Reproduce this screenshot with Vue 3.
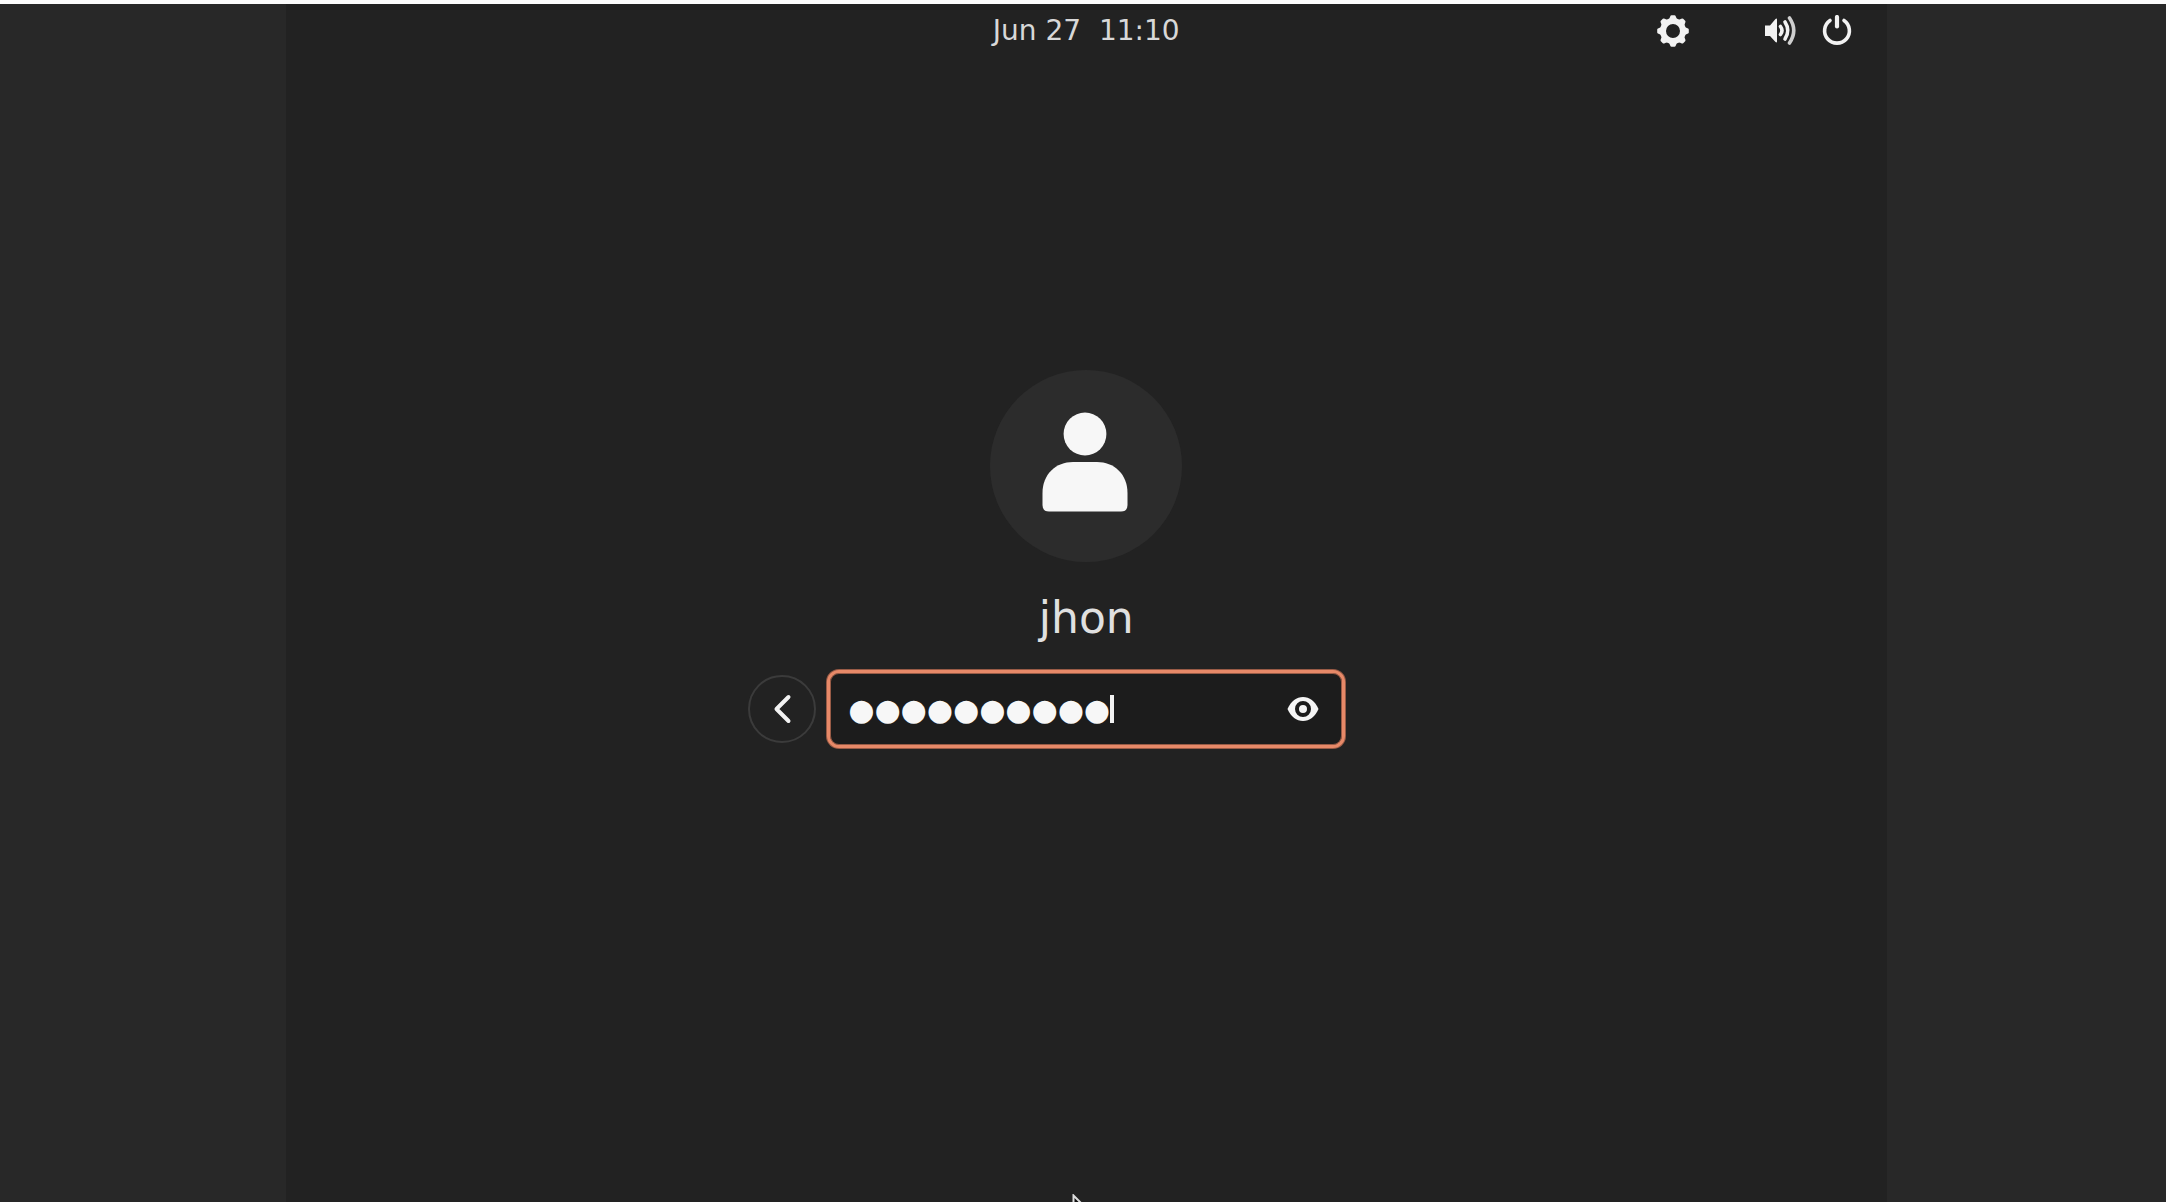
<script setup>
import { ref } from 'vue'

const mask = ref('●'.repeat(10))
const teeth = [0, 45, 90, 135, 180, 225, 270, 315]
</script>

<template>
  <div class="screen">
    <div class="panel">
      <header class="topbar">
        <time class="clock">Jun 27&nbsp; 11:10</time>
        <div class="tray">
          <button class="icon session" type="button" aria-label="Session settings">
            <svg viewBox="0 0 32 32" width="32" height="32">
              <circle cx="16" cy="16" r="10" fill="none" stroke="#f2f2f2" stroke-width="6" />
              <path
                v-for="a in teeth"
                :key="a"
                :transform="`rotate(${a} 16 16)`"
                d="M11.5 5.5 L13.2 1.5 Q13.6 0.2 14.6 0.2 H17.4 Q18.4 0.2 18.8 1.5 L20.5 5.5 Z"
                fill="#f2f2f2"
              />
            </svg>
          </button>
          <button class="icon" type="button" aria-label="Volume">
            <svg viewBox="0 0 32 32" width="32" height="32">
              <path d="M1 10.5 H6 L11.5 4 Q13 2.8 13 4.6 V26.4 Q13 28.2 11.5 27 L6 21 H1 Z" fill="#f2f2f2" />
              <g fill="none" stroke="#f2f2f2" stroke-linecap="round" stroke-width="3.6">
                <path d="M16.5 11.5 Q19.5 15.5 16.5 19.5" />
                <path d="M21 7 Q26.5 15.5 21 24" />
                <path d="M25.5 3 Q34 15.5 25.5 28" stroke="#cfcfcf" />
              </g>
            </svg>
          </button>
          <button class="icon" type="button" aria-label="Power">
            <svg viewBox="0 0 32 32" width="32" height="32">
              <g fill="none" stroke="#f2f2f2" stroke-linecap="round">
                <path d="M9 5.5 A12.4 12.4 0 1 0 23 5.500" stroke-width="3.6" />
                <path d="M16 2 V11.5" stroke-width="4.2" />
              </g>
            </svg>
          </button>
        </div>
      </header>

      <main class="login">
        <svg class="avatar" viewBox="0 0 192 192" width="192" height="192" aria-hidden="true">
          <circle cx="96" cy="96" r="96" fill="#2c2c2c" />
          <circle cx="95" cy="64" r="21.4" fill="#f7f7f7" />
          <path
            d="M52.500 123 C52.500 104 66 92 83 92 H107 C124 92 137.500 104 137.500 123 V135 Q137.500 141.500 131 141.500 H59 Q52.500 141.500 52.500 135 Z"
            fill="#f7f7f7"
          />
        </svg>
        <h1 class="name">jhon</h1>
        <form class="auth" @submit.prevent>
          <button class="back" type="button" aria-label="Back">
            <svg viewBox="0 0 32 32" width="32" height="32">
              <path d="M22.500 4 L10.500 16 L22.500 28" fill="none" stroke="#f2f2f2" stroke-width="4" stroke-linecap="round" stroke-linejoin="round" />
            </svg>
          </button>
          <div class="field">
            <input v-model="mask" class="password" type="text" aria-label="Password" autocomplete="off" spellcheck="false" />
            <span class="caret"></span>
            <button class="icon reveal" type="button" aria-label="Show password">
              <svg viewBox="0 0 32 32" width="32" height="32">
                <path d="M0.500 16 C4 8 9.500 4 16 4 S28 8 31.500 16 C28 24 22.500 28 16 28 S4 24 0.500 16 Z" fill="#f5f5f5" />
                <circle cx="16" cy="16" r="6" fill="#f5f5f5" stroke="#1c1c1c" stroke-width="4" />
              </svg>
            </button>
          </div>
        </form>
      </main>

      <svg class="pointer" viewBox="0 0 22 30" width="22" height="30" aria-hidden="true">
        <path d="M1.500 1.500 V24 L7 19 L11 28 L15 26 L11 18 H18 Z" fill="#111" stroke="#ddd" stroke-width="2" />
      </svg>
    </div>
  </div>
</template>

<style>
body {
  margin: 0;
  background: #282828;
}
</style>

<style scoped>
.screen {
  box-sizing: border-box;
  min-height: 100vh;
  display: flex;
  padding: 0 12.9% 0 13.2%;
  border-top: 4px solid #fdfdfd;
  background: #282828;
  color: #e0e0e0;
  font-family: "DejaVu Sans", sans-serif;
}

.panel {
  position: relative;
  flex: 1;
  overflow: hidden;
  background: #222222;
}

.topbar {
  display: grid;
  grid-template-columns: 1fr auto 1fr;
  align-items: center;
  height: 54px;
  padding: 0 34px;
}

.clock {
  grid-column: 2;
  font-size: 28px;
  line-height: 54px;
  color: #d8d8d8;
}

.tray {
  display: flex;
  justify-content: flex-end;
  gap: 25px;
}

.icon {
  flex: none;
  width: 32px;
  height: 32px;
  padding: 0;
  border: 0;
  background: none;
}

.icon svg,
.back svg {
  display: block;
}

.session {
  margin-right: 50px;
}

.login {
  display: flex;
  flex-direction: column;
  align-items: center;
  padding-top: 312px;
}

.name {
  margin: 30px 0 25px;
  font-size: 44px;
  font-weight: 400;
  line-height: 52px;
}

.auth {
  display: grid;
  grid-template-columns: 68px 520px 68px;
  align-items: center;
  gap: 10px;
}

.back {
  display: flex;
  align-items: center;
  justify-content: center;
  width: 68px;
  height: 68px;
  padding: 0;
  border: 2px solid #3b3b3b;
  border-radius: 50%;
  background: #222222;
}

.field {
  box-sizing: border-box;
  display: flex;
  align-items: center;
  height: 78px;
  margin: 1px;
  padding: 0 23px 0 18px;
  border: 3px solid #e78968;
  border-radius: 12px;
  background: #1c1c1c;
  box-shadow: 0 0 0 1px #985b46, inset 0 0 0 1px #985b46;
}

.password {
  width: 262px;
  height: 48px;
  padding: 0;
  border: 0;
  outline: 0;
  background: none;
  color: #f7f7f7;
  font-family: "DejaVu Sans", sans-serif;
  font-size: 30px;
}

.caret {
  width: 4px;
  height: 28px;
  background: #f2f2f2;
}

.reveal {
  margin-left: auto;
}

.pointer {
  position: absolute;
  top: calc(100% - 8px);
  left: 49.1%;
}
</style>
